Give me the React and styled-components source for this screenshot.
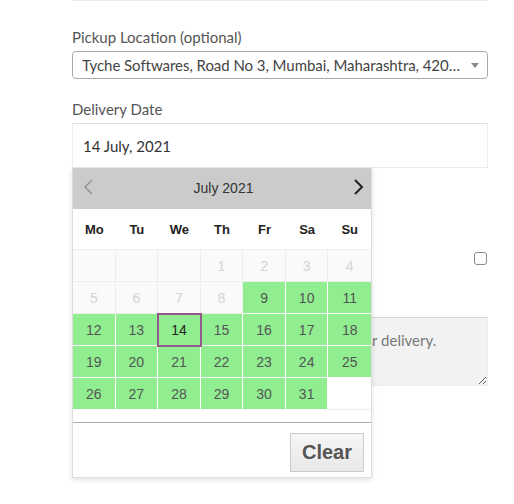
import React from 'react';
import styled, { createGlobalStyle } from 'styled-components';

const GlobalStyle = createGlobalStyle`
  body {
    margin: 0;
    background: #fff;
    font-family: Lato, "Open Sans", sans-serif;
  }
`;

const weekDays = ['Mo', 'Tu', 'We', 'Th', 'Fr', 'Sa', 'Su'];

// July 2021 starts on a Thursday; 5 rows of 7
const days = [null, null, null, ...Array.from({ length: 31 }, (_, i) => i + 1), null];
const firstAvailable = 9;
const selectedDay = 14;

const dayState = (day, index) => {
  if (day === null) return index < 7 ? 'disabled' : 'blank';
  return day < firstAvailable ? 'disabled' : 'available';
};

function Chevron({ dir, color, width }) {
  const points = dir === 'left' ? '9,1 2,8 9,15' : '1,1 8,8 1,15';
  return (
    <svg width="10" height="16" viewBox="0 0 10 16">
      <polyline points={points} fill="none" stroke={color} strokeWidth={width} />
    </svg>
  );
}

function DatePicker() {
  return (
    <Calendar>
      <CalHeader>
        <NavButton>
          <Chevron dir="left" color="#8f8f8f" width="1.4" />
        </NavButton>
        <MonthTitle>July 2021</MonthTitle>
        <NavButton>
          <Chevron dir="right" color="#222" width="2" />
        </NavButton>
      </CalHeader>
      <WeekRow>
        {weekDays.map((d) => (
          <WeekDay key={d}>{d}</WeekDay>
        ))}
      </WeekRow>
      <DaysGrid>
        {days.map((day, i) => (
          <DayCell
            key={i}
            $state={dayState(day, i)}
            $selected={day === selectedDay}
            $last={i % 7 === 6}
          >
            {day}
          </DayCell>
        ))}
      </DaysGrid>
      <ButtonPane>
        <ClearButton>Clear</ClearButton>
      </ButtonPane>
    </Calendar>
  );
}

export default function App() {
  return (
    <>
      <GlobalStyle />
      <Form>
        <TopRule />
        <Field $top={27}>
          <Label>Pickup Location (optional)</Label>
          <FakeSelect>
            <SelectText>Tyche Softwares, Road No 3, Mumbai, Maharashtra, 420001, India</SelectText>
            <Caret />
          </FakeSelect>
        </Field>
        <Field $top={21}>
          <Label>Delivery Date</Label>
          <DateWrap>
            <DateInput readOnly value="14 July, 2021" />
            <DatePicker />
          </DateWrap>
        </Field>
        <CheckRow>
          <CheckText>Ship to a different address?</CheckText>
          <Checkbox type="checkbox" />
        </CheckRow>
        <Field $top={18}>
          <Label>Order notes (optional)</Label>
          <Notes placeholder="Notes about your order, e.g. special notes for delivery." />
        </Field>
      </Form>
    </>
  );
}

const Form = styled.div`
  box-sizing: border-box;
  width: 416px;
  min-height: 504px;
  margin-left: 72px;
`;

const TopRule = styled.div`
  height: 1px;
  background: #ececec;
`;

const Field = styled.div`
  margin-top: ${(p) => p.$top}px;
`;

const Label = styled.label`
  display: block;
  margin-bottom: 5px;
  font-size: 15px;
  line-height: 18px;
  color: #555;
`;

const FakeSelect = styled.div`
  box-sizing: border-box;
  display: flex;
  align-items: center;
  height: 28px;
  padding: 0 8px 0 9px;
  border: 1px solid #aaa;
  border-radius: 4px;
  background: #fff;
`;

const SelectText = styled.span`
  flex: 1;
  min-width: 0;
  overflow: hidden;
  white-space: nowrap;
  text-overflow: ellipsis;
  font-size: 15px;
  letter-spacing: -0.05px;
  color: #444;
`;

const Caret = styled.span`
  margin-left: 7px;
  width: 0;
  height: 0;
  border-left: 4px solid transparent;
  border-right: 4px solid transparent;
  border-top: 5px solid #888;
`;

const DateWrap = styled.div`
  position: relative;
`;

const DateInput = styled.input`
  box-sizing: border-box;
  display: block;
  width: 100%;
  height: 45px;
  padding: 0 10px;
  border: 1px solid #ececec;
  border-top-color: #e0e0e0;
  outline: none;
  font-family: inherit;
  font-size: 15px;
  color: #333;
  background: #fff;
`;

const Calendar = styled.div`
  position: absolute;
  top: 100%;
  left: 0;
  z-index: 10;
  box-sizing: border-box;
  width: 300px;
  border: 1px solid #ddd;
  border-top: 0;
  background: #fff;
  box-shadow: 0 2px 5px rgba(0, 0, 0, 0.12);
  font-family: "Liberation Sans", Arial, sans-serif;
`;

const CalHeader = styled.div`
  display: flex;
  align-items: center;
  justify-content: space-between;
  height: 41px;
  padding: 0 7px 6px 10px;
  box-sizing: border-box;
  background: #cbcbcb;
`;

const NavButton = styled.span`
  display: flex;
  margin-top: 2px;
`;

const MonthTitle = styled.span`
  margin-top: 5px;
  font-size: 14px;
  color: #333;
`;

const WeekRow = styled.div`
  display: grid;
  grid-template-columns: repeat(7, 1fr);
  height: 40px;
  border-bottom: 1px solid #eee;
`;

const WeekDay = styled.span`
  display: flex;
  align-items: center;
  justify-content: center;
  font-size: 13px;
  font-weight: bold;
  color: #222;
`;

const cellBg = { disabled: '#fafafa', available: '#90ee90', blank: '#fff' };
const cellColor = { disabled: '#d4d4d4', available: '#555', blank: '#555' };

const DaysGrid = styled.div`
  display: grid;
  grid-template-columns: repeat(7, 1fr);
  grid-auto-rows: 32px;
  margin-bottom: 12px;
`;

const DayCell = styled.span`
  position: relative;
  box-sizing: border-box;
  display: flex;
  align-items: center;
  justify-content: center;
  background: ${(p) => cellBg[p.$state]};
  color: ${(p) => (p.$selected ? '#222' : cellColor[p.$state])};
  border-bottom: 1px solid ${(p) => (p.$state === 'available' ? '#fff' : '#eee')};
  border-right: ${(p) => (p.$last ? '0' : `1px solid ${p.$state === 'available' ? '#fff' : '#eee'}`)};
  font-size: 14px;
  padding-top: 1px;
  ${(p) =>
    p.$selected &&
    `
    outline: 2px solid #96588a;
    outline-offset: -1px;
    z-index: 1;
  `}
`;

const ButtonPane = styled.div`
  display: flex;
  justify-content: flex-end;
  height: 55px;
  box-sizing: border-box;
  padding: 10px 7px 0 0;
  border-top: 1px solid #aaa;
`;

const ClearButton = styled.button`
  box-sizing: border-box;
  width: 74px;
  height: 39px;
  border: 1px solid #ccc;
  background: linear-gradient(#f6f6f6, #e8e8e8);
  font-family: "Liberation Sans", Arial, sans-serif;
  font-size: 20px;
  font-weight: bold;
  color: #555;
  padding: 0;
`;

const CheckRow = styled.div`
  display: flex;
  align-items: center;
  justify-content: space-between;
  height: 32px;
  margin-top: 74px;
`;

const CheckText = styled.span`
  font-size: 15px;
  color: #555;
`;

const Checkbox = styled.input`
  appearance: none;
  box-sizing: border-box;
  width: 13px;
  height: 13px;
  margin: 0 1px 0 0;
  border: 1px solid #8a8a8a;
  border-radius: 3px;
  background: #fff;
`;

const Notes = styled.textarea`
  box-sizing: border-box;
  display: block;
  width: 100%;
  height: 69px;
  margin-top: 7px;
  padding: 11px 10px;
  border: 1px solid #ececec;
  border-top-color: #d8d8d8;
  background: #f2f2f2;
  font-family: inherit;
  font-size: 15px;
  line-height: 22px;
  color: #333;
  outline: none;

  &::placeholder {
    color: #777;
  }
`;
